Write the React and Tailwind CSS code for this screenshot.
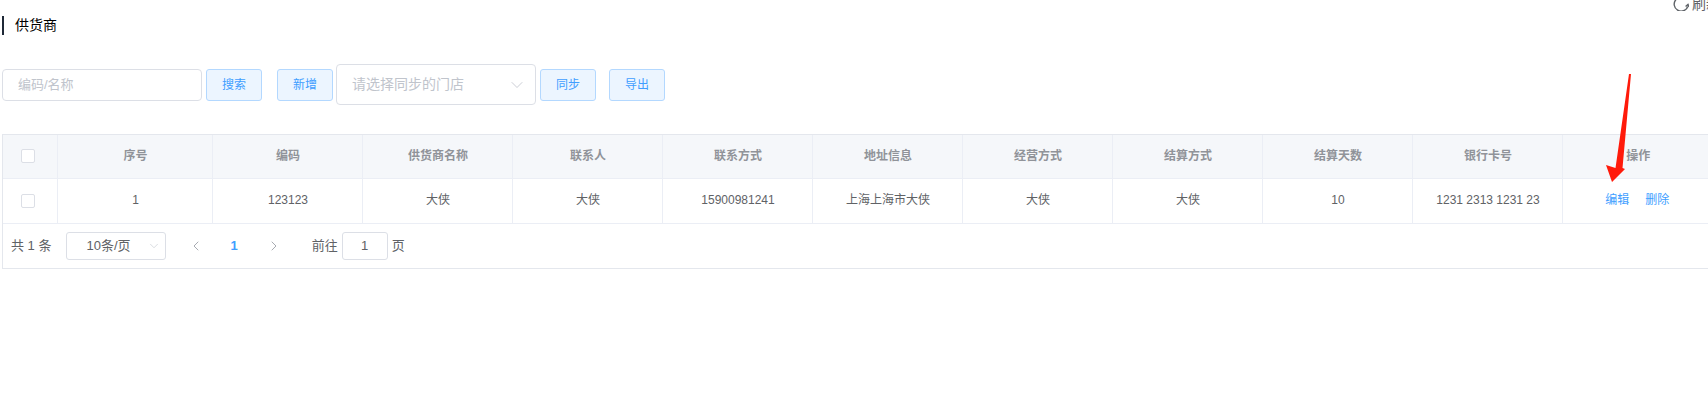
import React from 'react';
import { ChevronDown, ChevronLeft, ChevronRight } from 'lucide-react';

const fontStack = 'font-["Liberation_Sans","Noto_Sans_CJK_SC",sans-serif]';

const columns = [
    { title: '序号', value: '1', width: 'w-[155px]' },
    { title: '编码', value: '123123', width: 'w-[150px]' },
    { title: '供货商名称', value: '大侠', width: 'w-[150px]' },
    { title: '联系人', value: '大侠', width: 'w-[150px]' },
    { title: '联系方式', value: '15900981241', width: 'w-[150px]' },
    { title: '地址信息', value: '上海上海市大侠', width: 'w-[150px]' },
    { title: '经营方式', value: '大侠', width: 'w-[150px]' },
    { title: '结算方式', value: '大侠', width: 'w-[150px]' },
    { title: '结算天数', value: '10', width: 'w-[150px]' },
    { title: '银行卡号', value: '1231 2313 1231 23', width: 'w-[150px]' },
];

const PlainButton = ({ children, className = '' }) => (
    <button className={`w-[56px] h-[32px] rounded-[3px] border border-[#b3d8ff] bg-[#ecf5ff] text-[12px] text-[#409eff] ${className}`}>
        {children}
    </button>
);

const Checkbox = () => (
    <span className="block ml-[18px] w-[14px] h-[14px] rounded-[2px] border border-[#dcdfe6] bg-white" />
);

const RefreshIcon = () => (
    <svg className="shrink-0 -mb-[2px]" width="16" height="16" viewBox="0 0 16 16" fill="none" stroke="#5f6368" strokeWidth="1.4">
        <path d="M3 2.5 A7 7 0 1 0 14.8 9.5" />
        <path d="M12.6 9.5 L15 7.4 L16 10" />
    </svg>
);

const App = () => {
    return (
        <div className={`relative w-[1708px] h-[407px] overflow-hidden bg-white ${fontStack}`}>
            {/* Refresh link, cut off by the top and right edge */}
            <div className="h-[11px] overflow-hidden flex items-end justify-start pl-[1673px] gap-[3px] text-[14px] leading-[14px] text-[#606266] whitespace-nowrap">
                <RefreshIcon />
                <span>刷新</span>
            </div>

            {/* Title */}
            <div className="mt-[5px] ml-[2px] h-[19px] border-l-2 border-[#1f2937] pl-[11px] text-[14px] leading-[19px] text-black">
                供货商
            </div>

            {/* Toolbar */}
            <div className="mt-[29px] ml-[2px] h-[41px] flex items-center">
                <input
                    readOnly
                    placeholder="编码/名称"
                    className="w-[200px] h-[32px] rounded-[4px] border border-[#dcdfe6] px-[15px] text-[13px] placeholder:text-[#c0c4cc] outline-none"
                />
                <PlainButton className="ml-[4px]">搜索</PlainButton>
                <PlainButton className="ml-[15px]">新增</PlainButton>
                <div className="ml-[3px] w-[200px] h-[41px] flex items-center justify-between rounded-[4px] border border-[#dcdfe6] pl-[15px] pr-[8px] text-[14px] text-[#c0c4cc]">
                    <span>请选择同步的门店</span>
                    <ChevronDown size={20} strokeWidth={1} />
                </div>
                <PlainButton className="ml-[4px]">同步</PlainButton>
                <PlainButton className="ml-[13px]">导出</PlainButton>
            </div>

            {/* Table */}
            <div className="mt-[29px] ml-[2px] w-[1720px] border border-r-0 border-[#e4e7ed]">
                <table className="table-fixed border-collapse w-[1709px] text-[12px]">
                    <thead>
                        <tr className="h-[43px] bg-[#f5f7fa] text-[#909399]">
                            <th className="w-[54px] border-r border-b border-[#ebeef5] font-bold"><Checkbox /></th>
                            {columns.map((col) => (
                                <th key={col.title} className={`${col.width} pl-[2px] border-r border-b border-[#ebeef5] font-bold`}>{col.title}</th>
                            ))}
                            <th className="w-[150px] pl-[2px] border-b border-[#ebeef5] font-bold">操作</th>
                        </tr>
                    </thead>
                    <tbody>
                        <tr className="h-[45px] text-[#606266] text-center">
                            <td className="border-r border-b border-[#ebeef5]"><Checkbox /></td>
                            {columns.map((col) => (
                                <td key={col.title} className="pl-[2px] pb-[2px] border-r border-b border-[#ebeef5]">{col.value}</td>
                            ))}
                            <td className="pb-[2px] border-b border-[#ebeef5] text-[#409eff]">
                                <span>编辑</span>
                                <span className="ml-[16px]">删除</span>
                            </td>
                        </tr>
                    </tbody>
                </table>

                {/* Pagination */}
                <div className="h-[44px] flex items-center pl-[8px] text-[13px] text-[#606266]">
                    <span>共 1 条</span>
                    <div className="ml-[15px] w-[100px] h-[28px] flex items-center justify-between rounded-[3px] border border-[#dcdfe6] pl-[19px] pr-[4px]">
                        <span>10条/页</span>
                        <ChevronDown size={14} strokeWidth={1} className="text-[#c0c4cc]" />
                    </div>
                    <ChevronLeft size={16} strokeWidth={1.5} className="ml-[22px] text-[#a8abb2]" />
                    <span className="ml-[26px] font-bold text-[#409eff]">1</span>
                    <ChevronRight size={16} strokeWidth={1.5} className="ml-[28px] text-[#a8abb2]" />
                    <span className="ml-[30px]">前往</span>
                    <div className="ml-[4px] w-[46px] h-[28px] flex items-center justify-center rounded-[3px] border border-[#dcdfe6]">1</div>
                    <span className="ml-[4px]">页</span>
                </div>
            </div>

            {/* Red annotation arrow */}
            <svg className="absolute left-[1600px] top-[70px]" width="40" height="120" viewBox="0 0 40 120">
                <polygon points="29,4 31,4 22.5,98 25,99 12,112 6,95 15.5,98" fill="#ff1a0a" />
            </svg>
        </div>
    );
};

export default App;
